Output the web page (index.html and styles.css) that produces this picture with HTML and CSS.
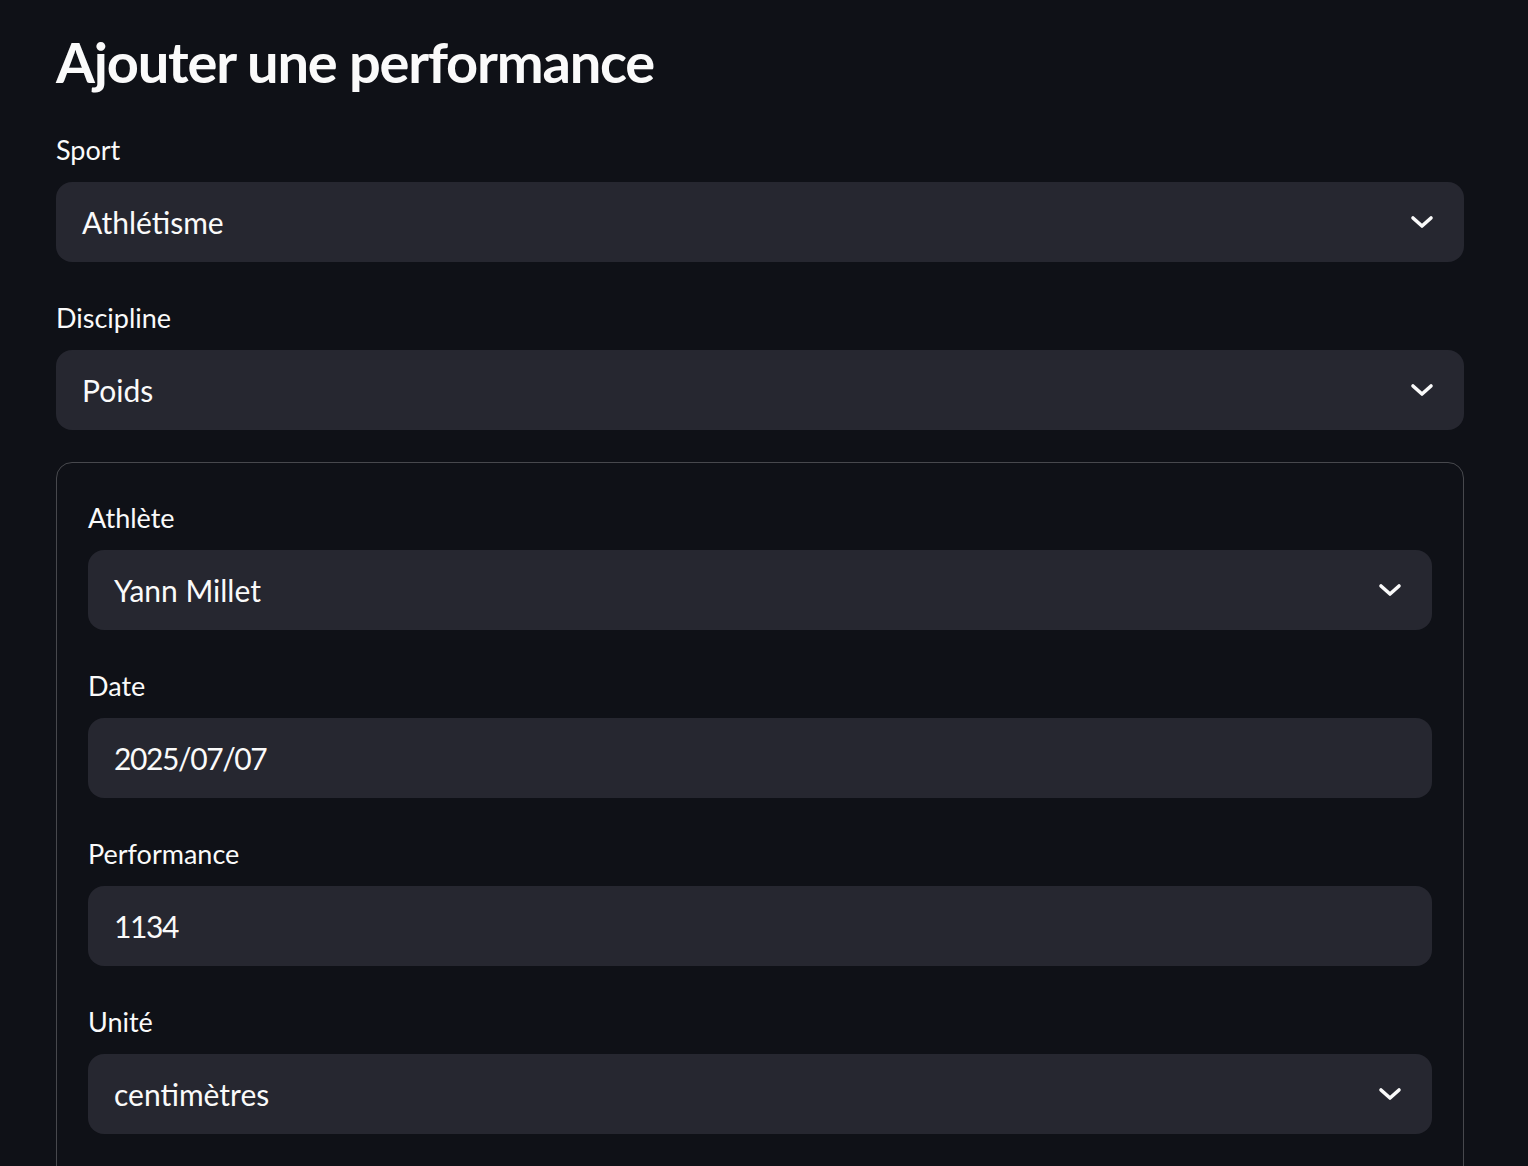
FILE: index.html
```html
<!DOCTYPE html>
<html lang="fr">
<head>
<meta charset="utf-8">
<title>Ajouter une performance</title>
<link rel="stylesheet" href="styles.css">
</head>
<body>
<main class="page">
  <h1 class="title">Ajouter une performance</h1>

  <div class="field">
    <div class="label">Sport</div>
    <div class="box select">
      <span class="value">Athlétisme</span>
      <svg class="chev" viewBox="0 0 24 14" width="24" height="14"><polyline points="3,3 12,11 21,3"/></svg>
    </div>
  </div>

  <div class="field">
    <div class="label">Discipline</div>
    <div class="box select">
      <span class="value">Poids</span>
      <svg class="chev" viewBox="0 0 24 14" width="24" height="14"><polyline points="3,3 12,11 21,3"/></svg>
    </div>
  </div>

  <section class="form">
    <div class="field">
      <div class="label">Athlète</div>
      <div class="box select">
        <span class="value">Yann Millet</span>
        <svg class="chev" viewBox="0 0 24 14" width="24" height="14"><polyline points="3,3 12,11 21,3"/></svg>
      </div>
    </div>

    <div class="field">
      <div class="label">Date</div>
      <div class="box">
        <span class="value num">2025/07/07</span>
      </div>
    </div>

    <div class="field">
      <div class="label">Performance</div>
      <div class="box">
        <span class="value num">1134</span>
      </div>
    </div>

    <div class="field">
      <div class="label">Unité</div>
      <div class="box select">
        <span class="value">centimètres</span>
        <svg class="chev" viewBox="0 0 24 14" width="24" height="14"><polyline points="3,3 12,11 21,3"/></svg>
      </div>
    </div>
  </section>
</main>
</body>
</html>
```

FILE: styles.css
```css
html, body {
  margin: 0;
  padding: 0;
  background: #0f1117;
  height: 100%;
  overflow: hidden;
}

body {
  font-family: "Lato", "Liberation Sans", sans-serif;
  color: #fafafa;
}

.page {
  padding: 22px 64px 0 56px;
  display: flex;
  flex-direction: column;
}

.title {
  margin: 0 0 28px 0;
  font-size: 56px;
  line-height: 80px;
  font-weight: 700;
  letter-spacing: -1.2px;
}

.field {
  display: flex;
  flex-direction: column;
  margin-bottom: 36px;
}

.label {
  font-size: 27px;
  line-height: 40px;
  margin-bottom: 12px;
}

.box {
  height: 80px;
  border-radius: 16px;
  background: #262730;
  display: flex;
  align-items: center;
  padding: 0 30px 0 26px;
  box-sizing: border-box;
}

.value {
  flex: 1;
  font-size: 30px;
  line-height: 40px;
}

.num {
  letter-spacing: -1.4px;
}

.chev {
  fill: none;
  stroke: #fafafa;
  stroke-width: 3.6;
  stroke-linecap: round;
  stroke-linejoin: round;
}

.form {
  margin-top: -4px;
  border: 1px solid rgba(250, 250, 250, 0.24);
  border-radius: 16px;
  padding: 35px 31px 31px 31px;
}
```
